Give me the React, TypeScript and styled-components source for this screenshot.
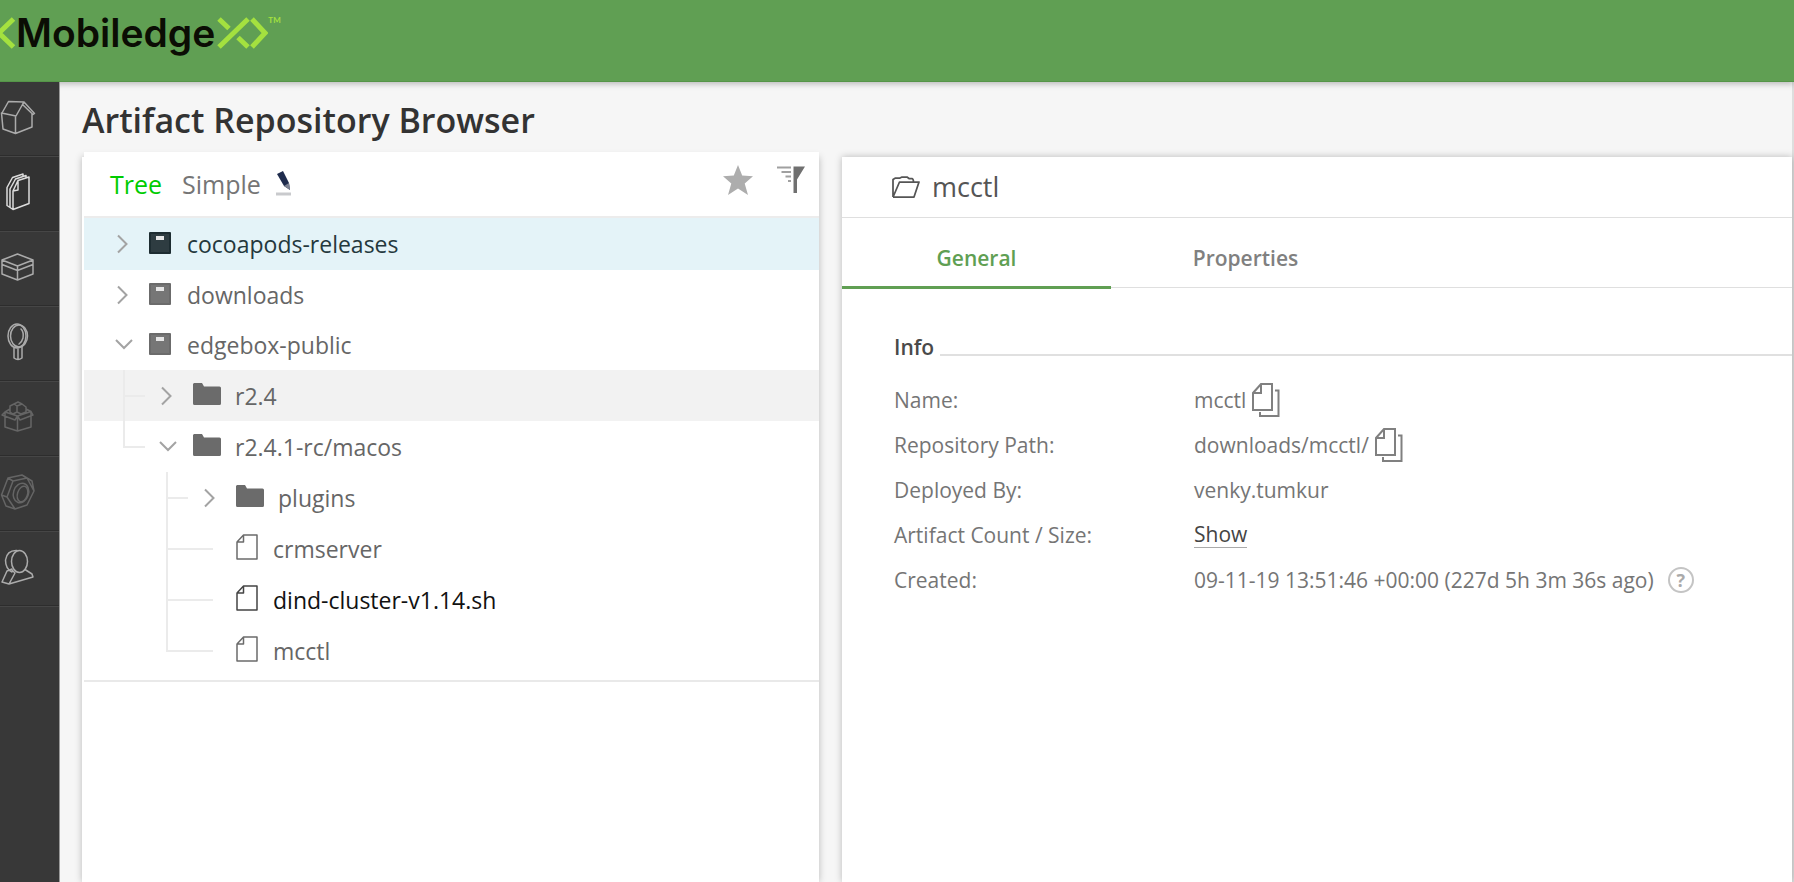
import React from 'react';
import styled, { createGlobalStyle, css } from 'styled-components';

const GlobalStyle = createGlobalStyle`
  * { box-sizing: border-box; }
  html, body, #root { height: 100%; }
  body {
    margin: 0;
    background: #f6f6f6;
    font-family: 'Open Sans', 'Noto Sans', sans-serif;
    color: #757575;
  }
  button { font: inherit; color: inherit; background: none; border: 0; padding: 0; cursor: pointer; }
  h1, h2, h3, ul, dl, dd { margin: 0; padding: 0; }
  ul { list-style: none; }
  svg { display: block; flex: none; }
`;

const Page = styled.div`
  min-height: 100%;
  display: flex;
  flex-direction: column;
`;

const Header = styled.header`
  height: 82px;
  background: #609f53;
  border-bottom: 1px solid #559548;
  box-shadow: 0 2px 6px rgba(0, 0, 0, 0.25);
  position: relative;
`;

const Logo = styled.a`
  display: inline-flex;
  align-items: flex-start;
  padding-top: 12px;
  text-decoration: none;
  color: #0b0d04;
`;

const Wordmark = styled.span`
  font-family: Inter, sans-serif;
  font-weight: 600;
  font-size: 39px;
  line-height: 42px;
`;

const Trademark = styled.span`
  font-family: Lato, sans-serif;
  font-weight: 700;
  font-size: 8px;
  line-height: 16px;
  color: #a4e13f;
`;

const Body = styled.div`
  flex: 1;
  display: flex;
`;

const Sidebar = styled.nav`
  position: relative;
  flex: none;
  width: 60px;
  background: #383838;
  border-right: 1px solid #9a9a9a;
`;

const SideItem = styled.button<{ $active?: boolean; $dim?: boolean }>`
  display: flex;
  align-items: center;
  width: 100%;
  height: 75px;
  padding-bottom: 4px;
  border-bottom: 1px solid #464646;
  box-shadow: inset 0 -1px 0 #2d2d2d;
  background: ${p => (p.$active ? '#323232' : 'transparent')};
  color: ${p => (p.$dim ? '#656565' : p.$active ? '#dcdcdc' : '#ababab')};
`;

const Main = styled.main`
  flex: 1;
  min-width: 0;
  display: flex;
  flex-direction: column;
  padding: 14px 0 0 22px;
  border-right: 2px solid #dedede;
`;

const Title = styled.h1`
  font-size: 34px;
  line-height: 48px;
  font-weight: 600;
  color: #333;
`;

const Columns = styled.div`
  flex: 1;
  display: flex;
  gap: 23px;
  padding-top: 13px;
`;

const panel = css`
  background: #fff;
  box-shadow: 0 0 7px rgba(0, 0, 0, 0.25);
`;

const TreePanel = styled.section`
  ${panel}
  flex: 0 0 737px;
  padding-left: 2px;
`;

const TreeBar = styled.div`
  display: flex;
  align-items: center;
  height: 66px;
  margin-top: -5px;
  padding: 0 14px 0 26px;
  background: #fff;
  border-bottom: 2px solid #ececec;
`;

const ViewButton = styled.button<{ $active?: boolean }>`
  font-size: 25px;
  line-height: 34px;
  margin-right: ${p => (p.$active ? 20 : 15)}px;
  color: ${p => (p.$active ? '#0c0' : '#757575')};
`;

const BarActions = styled.div`
  display: flex;
  align-items: center;
  gap: 24px;
  margin-left: auto;
  padding-bottom: 8px;
`;

const TreeList = styled.ul`
  padding-bottom: 4px;
  border-bottom: 2px solid #e9e9e9;
`;

const Row = styled.div<{ $level: number; $tone?: 'selected' | 'hover' }>`
  display: flex;
  align-items: center;
  height: ${p => (p.$tone === 'selected' ? 52 : p.$level ? 51 : 50)}px;
  padding-left: ${p => [31, 31, 74][p.$level]}px;
  background: ${p => (p.$tone === 'selected' ? '#e4f3f8' : p.$tone === 'hover' ? '#f2f2f2' : 'transparent')};
`;

const Branch = styled.span<{ $long?: boolean; $last?: boolean }>`
  position: relative;
  flex: none;
  align-self: stretch;
  width: ${p => (p.$long ? 70 : 36)}px;
  margin-left: 8px;
  &::before {
    content: '';
    position: absolute;
    left: 0;
    top: 0;
    height: ${p => (p.$last ? '27px' : '100%')};
    border-left: 2px solid #ebebeb;
  }
  &::after {
    content: '';
    position: absolute;
    left: 0;
    top: 25px;
    width: ${p => (p.$long ? 47 : 22)}px;
    border-top: 2px solid #ebebeb;
  }
`;

const Toggle = styled.button`
  display: flex;
  align-items: center;
  width: 34px;
  height: 24px;
`;

const NodeIcon = styled.span<{ $color: string; $width: number }>`
  display: flex;
  flex: none;
  width: ${p => p.$width}px;
  padding-bottom: 3px;
  color: ${p => p.$color};
`;

const Label = styled.span<{ $color: string }>`
  font-size: 23px;
  line-height: 34px;
  white-space: nowrap;
  color: ${p => p.$color};
`;

const DetailPanel = styled.section`
  ${panel}
  flex: 1;
  min-width: 0;
`;

const DetailHead = styled.div`
  display: flex;
  align-items: center;
  gap: 12px;
  height: 61px;
  padding-left: 50px;
  border-bottom: 1px solid #dfdfdf;
`;

const DetailTitle = styled.h2`
  font-size: 27px;
  line-height: 36px;
  font-weight: 400;
  color: #555;
`;

const Tabs = styled.div`
  display: flex;
  height: 70px;
  border-bottom: 1px solid #dfdfdf;
`;

const Tab = styled.button<{ $active?: boolean }>`
  width: 269px;
  height: 71px;
  padding-top: 12px;
  font-size: 21px;
  font-weight: 600;
  color: ${p => (p.$active ? '#609f53' : '#808080')};
  border-bottom: 3px solid ${p => (p.$active ? '#609f53' : 'transparent')};
`;

const Info = styled.div`
  padding: 44px 0 0 52px;
`;

const Legend = styled.h3`
  display: flex;
  gap: 6px;
  font-size: 21px;
  line-height: 30px;
  font-weight: 600;
  color: #4a4a4a;
  &::after {
    content: '';
    flex: 1;
    height: 22px;
    border-bottom: 2px solid #e0e0e0;
  }
`;

const Details = styled.dl`
  display: grid;
  grid-template-columns: 300px 1fr;
  grid-auto-rows: 45px;
  align-items: center;
  padding-top: 15px;
  font-size: 21px;
  white-space: nowrap;
`;

const Value = styled.dd`
  display: flex;
  align-items: center;
  gap: 6px;
`;

const ShowLink = styled.a`
  color: #444;
  line-height: 26px;
  text-decoration: none;
  border-bottom: 1px solid #aaa;
`;

const HelpButton = styled.button`
  width: 26px;
  height: 26px;
  margin-left: 8px;
  border: 2px solid #c4c4c4;
  border-radius: 50%;
  font-size: 18px;
  line-height: 20px;
  font-weight: 700;
  color: #aaa;
`;

const line = { fill: 'none', stroke: 'currentColor', strokeLinejoin: 'round' as const, strokeLinecap: 'round' as const };

const LogoLeft = () => (
  <svg width="16" height="40" viewBox="0 0 16 40" fill="none" stroke="#a4e13f" strokeWidth="5">
    <path d="M13.500 7L-1 21L13.500 35" />
  </svg>
);
const LogoRight = () => (
  <svg width="53" height="40" viewBox="0 0 53 40" fill="none" stroke="#a4e13f" strokeWidth="5">
    <path d="M4 35L33 7M4 7L14 16.500M23 25.500L33 35M37 7L50 21L37 35" />
  </svg>
);

const HomeIcon = () => (
  <svg width="36" height="36" viewBox="0 0 36 36" {...line} strokeWidth="1.500">
    <path d="M2 14L8.500 2.500L24 3L34.500 14.500L33 15.500L22.500 5.500L16 17L1.500 14L3 30L15.500 34.500L32 28V14.500M15.500 17V34.500M24 3L22.500 5.500" />
  </svg>
);
const ArtifactsIcon = () => (
  <svg width="36" height="40" viewBox="0 0 36 40" {...line} strokeWidth="1.500">
    <path d="M13 37.500L29 31.500V5L18 8.500L13 19ZM18 8.500V18L13 19M10 35.500V17L15.500 7L26 3.500V6M10 35.500L13 37.500M7 33.500V15.500L12.500 5.500L23 2V4.500M7 33.500L10 35.500" />
  </svg>
);
const BoxIcon = () => (
  <svg width="36" height="32" viewBox="0 0 36 32" {...line} strokeWidth="1.500">
    <path d="M2 9L17.500 3L33 9L17.500 15ZM2 9V23L17.500 29L33 23V9M17.500 15V29M2 13.500L17.500 19.500L33 13.500" />
  </svg>
);
const SearchIcon = () => (
  <svg width="36" height="40" viewBox="0 0 36 40" {...line} strokeWidth="1.500">
    <ellipse cx="17" cy="14" rx="9" ry="12" />
    <ellipse cx="19" cy="14" rx="8.500" ry="11" />
    <path d="M21 7Q24 10 23 16Q22 20 19 22M14 26V36Q18 39 22 36V25M18 27V37" />
  </svg>
);
const CrateIcon = () => (
  <svg width="36" height="34" viewBox="0 0 36 34" {...line} strokeWidth="1.500">
    <path d="M5 12V27L17.500 31L31 27V12M17.500 17V31M5 12L17.500 16L31 11.500L33 15L20 20L17.500 16L15 20L2 15ZM5 12L10 9M31 11.500L26 9M10 12V6L14 4L17 6V12L13 14ZM17 6L22 4L26 7V12L21 14L17 12M14 4L18 2L22 4" />
  </svg>
);
const NutIcon = () => (
  <svg width="36" height="38" viewBox="0 0 36 38" {...line} strokeWidth="1.500">
    <path d="M8 5L22 2L32 8L34 18L27 32L15 36L6 33L1.500 22ZM13 8L27 5L34 18M13 8L7 24L15 36M13 8L8 5M7 24L1.500 22" />
    <ellipse cx="21" cy="20" rx="7.500" ry="10" transform="rotate(18 21 20)" />
    <ellipse cx="22.500" cy="21" rx="5" ry="8" transform="rotate(18 22.500 21)" />
  </svg>
);
const UserIcon = () => (
  <svg width="36" height="38" viewBox="0 0 36 38" {...line} strokeWidth="1.500">
    <ellipse cx="19.500" cy="13.500" rx="8" ry="11" />
    <path d="M17 2.500Q7 2 5.500 12Q5.500 21 12 24M12 21L7 23L2 34L9 36L33 29L32 26L25 21.500M12 22L15 25L9 36" />
  </svg>
);

const PenIcon = () => (
  <svg width="18" height="26" viewBox="0 0 18 26">
    <path d="M1 3L7 0L13 12L14 19L8 15Z" fill="#1f2c4d" />
    <path d="M8 15L13 12L14 19Z" fill="#7d8292" />
    <path d="M0 21.500H15V24.500H0Z" fill="#c9cacd" />
  </svg>
);
const StarIcon = () => (
  <svg width="30" height="30" viewBox="0 0 30 30" fill="#adadad">
    <path d="M15 0L19.200 10.400L30 11.200L21.700 18.400L25 30L15 23.400L5 30L8.300 18.400L0 11.200L10.800 10.400Z" />
  </svg>
);
const FilterIcon = () => (
  <svg width="28" height="28" viewBox="0 0 28 28">
    <path d="M16.500 0.500H28L20 13.500V27H16.500Z" fill="#707070" />
    <path d="M0 1.500H14M4.500 6H14M8.500 10.500H14M11 15H14" stroke="#a0a0a0" strokeWidth="2" />
  </svg>
);
const Chevron = ({ open }: { open?: boolean }) =>
  open ? (
    <svg width="18" height="20" viewBox="0 0 18 20" fill="none" stroke="#a3a3a3" strokeWidth="2">
      <path d="M1 5L9 13L17 5" />
    </svg>
  ) : (
    <svg width="18" height="20" viewBox="0 0 18 20" fill="none" stroke="#a3a3a3" strokeWidth="2">
      <path d="M3 1.500L11.500 10L3 18.500" />
    </svg>
  );
const RepoIcon = () => (
  <svg width="22" height="22" viewBox="0 0 22 22">
    <rect width="22" height="22" rx="1" fill="currentColor" />
    <rect x="2" y="2" width="18" height="18" fill="#fff" opacity="0.080" />
    <rect x="7" y="4" width="8" height="4" fill="#e6e6e6" />
  </svg>
);
const FolderIcon = () => (
  <svg width="28" height="22" viewBox="0 0 28 22" fill="currentColor">
    <path d="M1 0H9L11 3.500H26.500Q28 3.500 28 5V20.500Q28 22 26.500 22H1.500Q0 22 0 20.500V1Z" />
  </svg>
);
const FileIcon = () => (
  <svg width="22" height="26" viewBox="0 0 22 26" {...line} strokeWidth="1.500">
    <path d="M7.500 1H21V25H1V8ZM7.500 1V8H1" />
  </svg>
);
const OpenFolderIcon = () => (
  <svg width="28" height="22" viewBox="0 0 28 22" fill="none" stroke="#555" strokeWidth="1.750" strokeLinejoin="round">
    <path d="M1 21V3.500L3.500 2H8L10 1H15L17 2.500H20Q21.500 3 21.500 6M1 21H22L27 6H7.500L1.500 20" />
  </svg>
);
const CopyIcon = () => (
  <svg width="28" height="34" viewBox="0 0 28 34" fill="none" stroke="#808080" strokeWidth="2">
    <path d="M9 1H20V27H1V10ZM9 1V10H1M23 7.500H26.500V33H8V29" />
  </svg>
);

type Node = {
  name: string;
  kind: 'repo' | 'folder' | 'file';
  level: number;
  open?: boolean;
  last?: boolean;
  tone?: 'selected' | 'hover';
  color?: string;
  iconColor?: string;
};

const nodes: Node[] = [
  { name: 'cocoapods-releases', kind: 'repo', level: 0, tone: 'selected', color: '#24383d', iconColor: '#1d2c31' },
  { name: 'downloads', kind: 'repo', level: 0 },
  { name: 'edgebox-public', kind: 'repo', level: 0, open: true },
  { name: 'r2.4', kind: 'folder', level: 1, tone: 'hover' },
  { name: 'r2.4.1-rc/macos', kind: 'folder', level: 1, open: true, last: true },
  { name: 'plugins', kind: 'folder', level: 2 },
  { name: 'crmserver', kind: 'file', level: 2 },
  { name: 'dind-cluster-v1.14.sh', kind: 'file', level: 2, color: '#111', iconColor: '#444' },
  { name: 'mcctl', kind: 'file', level: 2, last: true },
];

const icons = { repo: RepoIcon, folder: FolderIcon, file: FileIcon };
const iconWidth = { repo: 38, folder: 42, file: 37 };

const TreeNode = ({ node }: { node: Node }) => {
  const Icon = icons[node.kind];
  const isFile = node.kind === 'file';
  return (
    <li>
      <Row $level={node.level} $tone={node.tone}>
        {node.level > 0 && <Branch $long={isFile} $last={node.last} />}
        {!isFile && (
          <Toggle aria-label={`Toggle ${node.name}`} aria-expanded={!!node.open}>
            <Chevron open={node.open} />
          </Toggle>
        )}
        <NodeIcon $color={node.iconColor ?? '#6b6b6b'} $width={iconWidth[node.kind]}>
          <Icon />
        </NodeIcon>
        <Label $color={node.color ?? '#666'}>{node.name}</Label>
      </Row>
    </li>
  );
};

const sideItems = [
  { label: 'Home', Icon: HomeIcon },
  { label: 'Artifacts', Icon: ArtifactsIcon, active: true },
  { label: 'Packages', Icon: BoxIcon },
  { label: 'Search', Icon: SearchIcon },
  { label: 'Builds', Icon: CrateIcon, dim: true },
  { label: 'Admin', Icon: NutIcon, dim: true },
  { label: 'User', Icon: UserIcon },
];

export default function App() {
  return (
    <Page>
      <GlobalStyle />
      <Header>
        <Logo href="#">
          <LogoLeft />
          <Wordmark>Mobiledge</Wordmark>
          <LogoRight />
          <Trademark>TM</Trademark>
        </Logo>
      </Header>
      <Body>
        <Sidebar aria-label="Main">
          {sideItems.map(({ label, Icon, active, dim }) => (
            <SideItem key={label} aria-label={label} $active={active} $dim={dim}>
              <Icon />
            </SideItem>
          ))}
        </Sidebar>
        <Main>
          <Title>Artifact Repository Browser</Title>
          <Columns>
            <TreePanel>
              <TreeBar>
                <ViewButton $active>Tree</ViewButton>
                <ViewButton>Simple</ViewButton>
                <PenIcon />
                <BarActions>
                  <button aria-label="Favorites"><StarIcon /></button>
                  <button aria-label="Filter"><FilterIcon /></button>
                </BarActions>
              </TreeBar>
              <TreeList>
                {nodes.map(node => (
                  <TreeNode key={node.name} node={node} />
                ))}
              </TreeList>
            </TreePanel>
            <DetailPanel>
              <DetailHead>
                <OpenFolderIcon />
                <DetailTitle>mcctl</DetailTitle>
              </DetailHead>
              <Tabs role="tablist">
                <Tab role="tab" aria-selected $active>General</Tab>
                <Tab role="tab" aria-selected={false}>Properties</Tab>
              </Tabs>
              <Info>
                <Legend>Info</Legend>
                <Details>
                  <dt>Name:</dt>
                  <Value>mcctl<button aria-label="Copy name"><CopyIcon /></button></Value>
                  <dt>Repository Path:</dt>
                  <Value>downloads/mcctl/<button aria-label="Copy path"><CopyIcon /></button></Value>
                  <dt>Deployed By:</dt>
                  <Value>venky.tumkur</Value>
                  <dt>Artifact Count / Size:</dt>
                  <Value><ShowLink href="#">Show</ShowLink></Value>
                  <dt>Created:</dt>
                  <Value>09-11-19 13:51:46 +00:00 (227d 5h 3m 36s ago)<HelpButton aria-label="Help">?</HelpButton></Value>
                </Details>
              </Info>
            </DetailPanel>
          </Columns>
        </Main>
      </Body>
    </Page>
  );
}
